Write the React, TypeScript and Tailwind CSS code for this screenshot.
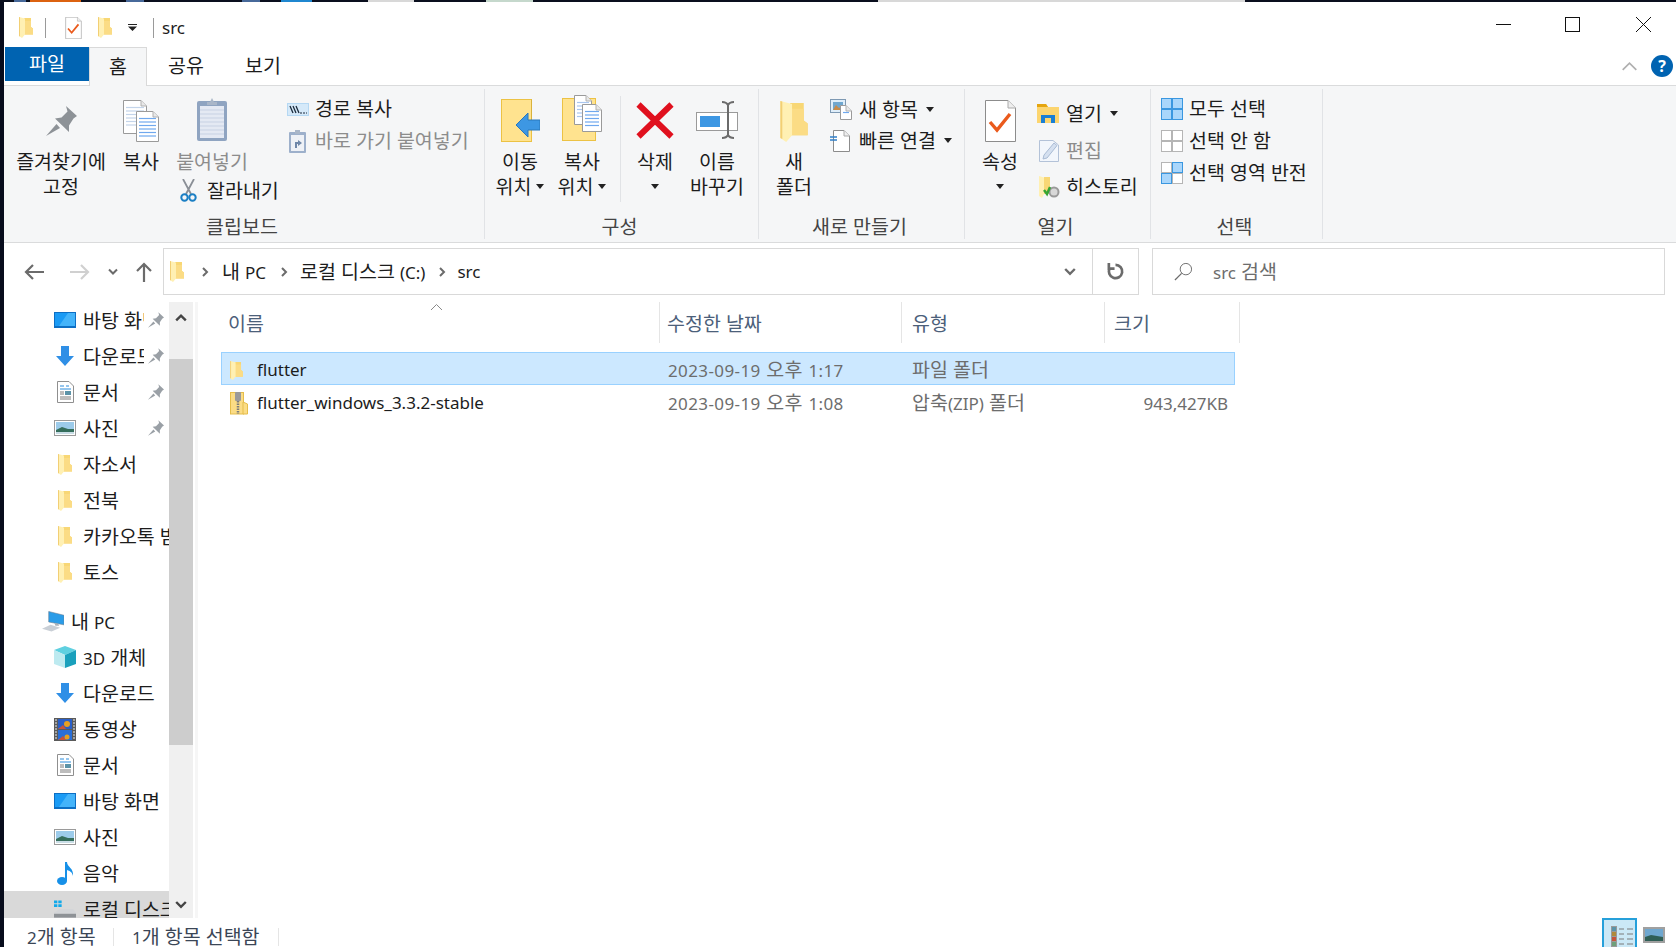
import type { ReactNode } from 'react';

// latin runs are set smaller than hangul, the way the two faces sit together in the reference
const T = ({ children }: { children: string }) => (
  <>
    {children.split(/([!-~]+)/).map((p, i) =>
      i % 2 ? (
        <span key={i} className="text-[17px]">
          {p}
        </span>
      ) : (
        p
      ),
    )}
  </>
);

const Folder = ({ className = 'h-[21px] w-[14px]' }: { className?: string }) => (
  <svg viewBox="0 0 14 21" className={className}>
    <path d="M5 1H12V10L14 11.5V17.5H5z" fill="#f8d775" />
    <path d="M5 4H12V10L14 11.5V17.5H5z" fill="#fbdc85" />
    <path d="M0 0L6 1.5V17.5L3 21L0 19z" fill="#fff0b3" />
    <path d="M0 0L1 .2V19.4L0 19z" fill="#f2cf74" />
  </svg>
);

const Caret = () => (
  <svg viewBox="0 0 8 5" className="inline-block h-[5px] w-[8px] shrink-0">
    <path d="M0 0H8L4 5z" fill="#222" />
  </svg>
);

const CheckDoc = ({ className }: { className: string }) => (
  <svg viewBox="0 0 31 42" className={className}>
    <path d="M.5.5H23L30.5 8V41.5H.5z" fill="#fff" stroke="#8c8c8c" />
    <path d="M23 .5V8H30.5" fill="#eee" stroke="#aaa" />
    <path d="M5 22L12 30L25 14" fill="none" stroke="#ea5a1c" strokeWidth="3.4" />
  </svg>
);

const Page = ({ x, y, w, h, lines = '#6fa8ee' }: { x: number; y: number; w: number; h: number; lines?: string }) => (
  <g>
    <path d={`M${x + 0.5} ${y + 0.5}H${x + w - 6}L${x + w - 0.5} ${y + 6}V${y + h - 0.5}H${x + 0.5}z`} fill="#fff" stroke="#9a9a9a" />
    <path d={`M${x + w - 6} ${y + 0.5}V${y + 6}H${x + w - 0.5}`} fill="#e8e8e8" stroke="#b0b0b0" />
    {Array.from({ length: Math.floor((h - 10) / 3.5) }).map((_, i) => (
      <path key={i} d={`M${x + 3} ${y + 7.5 + i * 3.5}H${x + w - 3}`} stroke={lines} strokeWidth="1.2" />
    ))}
  </g>
);

const Pin = ({ className = 'h-[30px] w-[31px]', fill = '#8d9297' }: { className?: string; fill?: string }) => (
  <svg viewBox="0 0 31 30" className={className}>
    <path d="M20 0L31 10L27.500 12.500L23 19.500L23 26L9 12.500L15.500 11.500L21.500 5.500z" fill={fill} />
    <path d="M10.500 18L14 22L0 30z" fill={fill} />
  </svg>
);

const CopyIcon = () => (
  <svg viewBox="0 0 36 42" className="h-[42px] w-[36px]">
    <Page x={0} y={0} w={24} h={34} lines="#c3d4ea" />
    <Page x={13} y={11} w={23} h={31} />
  </svg>
);

const Clipboard = ({ className = 'h-[43px] w-[30px]' }: { className?: string }) => (
  <svg viewBox="0 0 30 43" className={className}>
    <rect x="0" y="3" width="30" height="40" rx="2" fill="#8fa4c1" />
    <rect x="3" y="8" width="24" height="32" fill="#e4e9f3" />
    {[12, 16, 20, 24, 28, 32, 36].map((y) => (
      <path key={y} d={`M3 ${y}H27`} stroke="#c7d1e3" />
    ))}
    <path d="M10 7V4H13L15 0L17 4H20V7z" fill="#a9b6c8" />
  </svg>
);

const PathIcon = () => (
  <svg viewBox="0 0 22 13" className="h-[13px] w-[22px]">
    <rect width="22" height="13" fill="#b5d8f3" />
    <rect x="1" y="1" width="20" height="11" fill="#d5e9f9" />
    <path d="M3 3L6 10M6 3L9 10M9 3L12 10" stroke="#1b2b3c" strokeWidth="1.3" />
    <path d="M13 10H15M16 10H18M19 10H20" stroke="#1b2b3c" />
  </svg>
);

const ShortcutPaste = () => (
  <svg viewBox="0 0 17 23" className="h-[23px] w-[17px]">
    <rect y="2" width="17" height="21" rx="1" fill="#9db0cb" />
    <rect x="2" y="5" width="13" height="16" fill="#eef1f6" />
    <path d="M6 0H11V4H6z" fill="#a9b6c8" />
    <path d="M6 18V12H9V10L13 13L9 16V14H8V18z" fill="#6f87a8" />
  </svg>
);

const Scissors = () => (
  <svg viewBox="0 0 17 23" className="h-[23px] w-[17px] shrink-0">
    <path d="M3 0L11 15M14 0L6 15" stroke="#8a8f96" strokeWidth="1.8" fill="none" />
    <circle cx="4.5" cy="18.5" r="3.2" fill="none" stroke="#1b7fc4" strokeWidth="2" />
    <circle cx="12.5" cy="18.5" r="3.2" fill="none" stroke="#1b7fc4" strokeWidth="2" />
  </svg>
);

const MoveIcon = () => (
  <svg viewBox="0 0 39 43" className="h-[43px] w-[39px]">
    <rect x=".5" y=".5" width="30" height="42" fill="#ffe38f" stroke="#ecc244" />
    <path d="M30.5 .5V30" stroke="#d9b23c" />
    <path d="M15 26L27 14V21H39V31H27V38z" fill="#3d97e3" stroke="#2a78bb" />
  </svg>
);

const CopyToIcon = () => (
  <svg viewBox="0 0 40 46" className="h-[46px] w-[40px]">
    <rect x=".5" y="3.5" width="33" height="42" fill="#ffe38f" stroke="#ecc244" />
    <Page x={12} y={0} w={18} h={30} lines="#a9c6ee" />
    <Page x={20} y={9} w={20} h={28} />
  </svg>
);

const DeleteIcon = () => (
  <svg viewBox="0 0 38 37" className="h-[37px] w-[38px]">
    <path d="M2.5 2.5L35.5 34.5M35.5 2.5L2.5 34.5" stroke="#e0101e" strokeWidth="6" />
  </svg>
);

const RenameIcon = () => (
  <svg viewBox="0 0 42 38" className="h-[38px] w-[42px]">
    <rect x=".5" y="11.5" width="41" height="18" fill="#fff" stroke="#9a9a9a" />
    <rect x="4" y="15" width="20" height="11" fill="#3d97e3" />
    <path d="M26 1C29 1 31 2 32 4C33 2 35 1 38 1M32 4V34M26 37C29 37 31 36 32 34C33 36 35 37 38 37" fill="none" stroke="#6b6b6b" strokeWidth="2" />
  </svg>
);

const NewItemIcon = () => (
  <svg viewBox="0 0 22 21" className="h-[21px] w-[22px]">
    <rect x=".5" y=".5" width="15" height="13" fill="#dfeefa" stroke="#7e99b3" />
    <rect x="3" y="3" width="10" height="8" fill="#6fa7cf" />
    <path d="M3 11L6 6L9 9L13 7V11z" fill="#c78b4a" />
    <Page x={10} y={6} w={12} h={15} />
  </svg>
);

const EasyAccessIcon = () => (
  <svg viewBox="0 0 20 22" className="h-[22px] w-[20px]">
    <path d="M3.5 .5H14L19.5 6V21.5H3.5z" fill="#fff" stroke="#8c8c8c" />
    <path d="M14 .5V6H19.5" fill="#eee" stroke="#aaa" />
    <path d="M0 7H7M0 10H7" stroke="#2f7fc9" strokeWidth="1.4" />
  </svg>
);

const OpenIcon = () => (
  <svg viewBox="0 0 22 19" className="h-[19px] w-[22px]">
    <path d="M0 0H9L11 3H22V19H0z" fill="#fcd56f" />
    <path d="M0 0H9L11 3H0z" fill="#e5a50f" />
    <path d="M4 19V11H18V19H14V14H8V19z" fill="#1a7fd4" />
  </svg>
);

const EditIcon = () => (
  <svg viewBox="0 0 20 22" className="h-[22px] w-[20px]">
    <path d="M.5 .5H14L19.5 5V21.5H.5z" fill="#f2f6fc" stroke="#b3c2d8" />
    <path d="M4 19L5 15L15 3L18 5.500L8 18z" fill="#d5e0f0" stroke="#a9bbd4" />
  </svg>
);

const HistoryIcon = () => (
  <svg viewBox="0 0 21 22" className="h-[22px] w-[21px]">
    <path d="M0 0L5 1.5V18L3 22L0 20z" fill="#fff0b3" />
    <path d="M5 1H11V18H5z" fill="#f8d775" />
    <circle cx="15" cy="16" r="5.500" fill="#9a9a9a" />
    <circle cx="15" cy="16" r="3.500" fill="#d8d8d8" />
    <path d="M5 14L8 18L11 11" fill="none" stroke="#35a534" strokeWidth="2.4" />
  </svg>
);

const SelectGrid = ({ on }: { on: boolean[] }) => (
  <svg viewBox="0 0 22 22" className="h-[22px] w-[22px]">
    {[
      [0.5, 0.5],
      [11.5, 0.5],
      [0.5, 11.5],
      [11.5, 11.5],
    ].map(([x, y], i) => (
      <rect key={i} x={x} y={y} width="10" height="10" fill={on[i] ? '#a9d6fb' : '#fff'} stroke={on[i] ? '#3a97e0' : '#b5b5b5'} />
    ))}
  </svg>
);

const Desktop = () => (
  <svg viewBox="0 0 22 16" className="h-[16px] w-[22px]">
    <rect width="22" height="16" fill="#0d6fc4" />
    <rect x="1" y="1" width="20" height="13" fill="#1a9bf5" />
    <path d="M14 1H21V14H5z" fill="#44b4fa" />
  </svg>
);

const Download = () => (
  <svg viewBox="0 0 18 20" className="h-[20px] w-[18px]">
    <path d="M5 0H13V10H18L9 20L0 10H5z" fill="#2f8fe6" />
  </svg>
);

const DocIcon = () => (
  <svg viewBox="0 0 17 22" className="h-[22px] w-[17px]">
    <path d="M.5 .5H12L16.500 5V21.500H.5z" fill="#fff" stroke="#8f8f8f" />
    <path d="M3 5H7M9 5H12M3 8H14" stroke="#2c8ddc" />
    <rect x="8" y="10" width="6" height="4" fill="#5b93a8" />
    <path d="M3 11H7M3 13H7M3 16H14M3 18H14" stroke="#7a7a7a" />
  </svg>
);

const Pictures = () => (
  <svg viewBox="0 0 22 16" className="h-[16px] w-[22px]">
    <rect x=".5" y=".5" width="21" height="15" fill="#fff" stroke="#9a9a9a" />
    <rect x="2" y="2" width="18" height="12" fill="#9ccbea" />
    <path d="M2 10L8 7L14 9L20 9V14H2z" fill="#356e5c" />
    <path d="M2 12H20V14H2z" fill="#c9dde6" />
  </svg>
);

const Pc = () => (
  <svg viewBox="0 0 23 21" className="h-[21px] w-[23px]">
    <path d="M7 0L23 4V14L7 11z" fill="#2a9ce8" stroke="#6a7f92" strokeWidth=".6" />
    <path d="M0 18L9 14L19 17L10 21z" fill="#c9cfd6" />
    <path d="M13 12L14 15L18 15L17 13z" fill="#a8b0b8" />
  </svg>
);

const Cube = () => (
  <svg viewBox="0 0 22 22" className="h-[22px] w-[22px]">
    <path d="M11 0L22 4L11 9L0 4z" fill="#5fd0e0" />
    <path d="M0 4L11 9V22L0 18z" fill="#bdeaf0" />
    <path d="M22 4L11 9V22L22 18z" fill="#1aa0bc" />
  </svg>
);

const Film = () => (
  <svg viewBox="0 0 22 23" className="h-[23px] w-[22px]">
    <rect width="22" height="23" fill="#5a5a5a" />
    <rect x="4" y="1" width="14" height="10" fill="#2a5fc8" />
    <rect x="4" y="12" width="14" height="10" fill="#2a6fd8" />
    <circle cx="13" cy="6" r="3" fill="#e8a020" />
    <path d="M4 11L9 7L12 11zM4 22L9 18L12 22z" fill="#c8533a" />
    <circle cx="13" cy="19" r="2.500" fill="#e8a020" />
    <path d="M1 2H3M1 5H3M1 8H3M1 11H3M1 14H3M1 17H3M1 20H3M19 2H21M19 5H21M19 8H21M19 11H21M19 14H21M19 17H21M19 20H21" stroke="#eee" />
  </svg>
);

const Music = () => (
  <svg viewBox="0 0 17 23" className="h-[23px] w-[17px]">
    <ellipse cx="5" cy="19" rx="5" ry="4" fill="#1690e8" />
    <path d="M8 0H10C10 5 17 6 16 14C15 10 13 9 10 8V19H8z" fill="#1690e8" />
  </svg>
);

const Drive = () => (
  <svg viewBox="0 0 23 18" className="h-[18px] w-[23px]">
    <path d="M0 0H3.500V3H0zM4.500 0H8V3H4.500zM0 4H3.500V7H0zM4.500 4H8V7H4.500z" fill="#11a9ea" />
    <path d="M0 13L6 9H20L23 13V18H0z" fill="#d3d5d8" />
    <path d="M0 14H23V18H0z" fill="#8e9296" />
  </svg>
);

const ZipIcon = () => (
  <svg viewBox="0 0 18 23" className="h-[23px] w-[18px]">
    <rect x=".5" y=".5" width="13" height="21.500" fill="#fbdc85" stroke="#e5bd4a" />
    <path d="M13 10L17.500 12V22H13z" fill="#fbdc85" stroke="#e5bd4a" />
    <rect x="5" y="0" width="6" height="9" rx="1" fill="#9a9a9a" />
    <path d="M8 9V22" stroke="#7b7b7b" strokeWidth="2.500" strokeDasharray="1.500 1" />
  </svg>
);

const Chevron = ({ dir = 'right', className = '', color = '#6b6b6b', width = 2 }: { dir?: 'right' | 'down' | 'up'; className?: string; color?: string; width?: number }) => {
  const d = dir === 'right' ? 'M2 1L6 5L2 9' : dir === 'down' ? 'M1 2.500L5 6.500L9 2.500' : 'M1 7L5 3L9 7';
  return (
    <svg viewBox={dir === 'right' ? '0 0 8 10' : '0 0 10 10'} className={className}>
      <path d={d} fill="none" stroke={color} strokeWidth={width} />
    </svg>
  );
};

const Arrow = ({ rotate, color }: { rotate: string; color: string }) => (
  <svg viewBox="0 0 20 16" className={`h-[16px] w-[20px] ${rotate}`}>
    <path d="M20 8H2M9 1L2 8L9 15" fill="none" stroke={color} strokeWidth="2.200" />
  </svg>
);

function LargeButton({ icon, lines, className = '', disabled }: { icon: ReactNode; lines: ReactNode[]; className?: string; disabled?: boolean }) {
  return (
    <div className={`flex shrink-0 flex-col items-center ${className}`}>
      <div className="flex h-[53px] items-end">{icon}</div>
      <div className={`mt-[7px] flex flex-col items-center leading-[25px] ${disabled ? 'text-[#8c8c8c]' : ''}`}>
        {lines.map((l, i) => (
          <div key={i} className="flex h-[25px] items-center gap-[5px] whitespace-nowrap">
            {l}
          </div>
        ))}
      </div>
    </div>
  );
}

function SmallRow({ icon, text, h, slot, disabled, caret }: { icon: ReactNode; text: string; h: string; slot: string; disabled?: boolean; caret?: boolean }) {
  return (
    <div className={`flex items-center whitespace-nowrap ${h} ${disabled ? 'text-[#8c8c8c]' : ''}`}>
      <div className={`flex shrink-0 items-center ${slot}`}>{icon}</div>
      <span>{text}</span>
      {caret && (
        <span className="ml-[8px] flex">
          <Caret />
        </span>
      )}
    </div>
  );
}

function Group({ label, width, children }: { label: string; width: string; children: ReactNode }) {
  return (
    <div className={`flex h-full shrink-0 flex-col border-r border-[#e1e3e6] ${width}`}>
      <div className="flex flex-1 items-start">{children}</div>
      <div className="flex h-[24px] items-center justify-center pr-[4px] text-[#444]">{label}</div>
    </div>
  );
}

function NavItem({ icon, text, pin, selected, indent = 'pl-[50px]', slot = 'w-[29px]' }: { icon: ReactNode; text: string; pin?: boolean; selected?: boolean; indent?: string; slot?: string }) {
  return (
    <div className={`flex h-[36px] shrink-0 items-center ${indent} ${selected ? 'bg-[#d9d9d9]' : ''}`}>
      <div className={`flex shrink-0 items-center ${slot}`}>
        <div className="flex w-[22px] justify-center">{icon}</div>
      </div>
      <div className={`overflow-hidden whitespace-nowrap pt-px ${pin ? 'w-[61px]' : 'flex-1'}`}>
        <T>{text}</T>
      </div>
      {pin && <Pin className="ml-[4px] h-[16px] w-[16px] shrink-0" fill="#9aa0a6" />}
    </div>
  );
}

function FileRow({ icon, name, date, type, size, selected }: { icon: ReactNode; name: string; date: string; type: string; size?: string; selected?: boolean }) {
  return (
    <div className={`flex h-[33px] w-[1014px] items-center border pt-[3px] ${selected ? 'border-[#99d1ff] bg-[#cce8ff]' : 'border-transparent'}`}>
      <div className="flex w-[446px] shrink-0 items-center pl-[8px]">
        <div className="flex w-[27px] shrink-0">{icon}</div>
        <T>{name}</T>
      </div>
      <div className="w-[244px] shrink-0 whitespace-nowrap tracking-[0.4px] text-[#6d6d6d]">
        <T>{date}</T>
      </div>
      <div className="w-[193px] shrink-0 whitespace-nowrap text-[#6d6d6d]">
        <T>{type}</T>
      </div>
      <div className="w-[123px] shrink-0 text-right text-[#6d6d6d]">
        <T>{size ?? ''}</T>
      </div>
    </div>
  );
}

const strip = [
  ['w-[14px]', 'bg-[#0a0f1e]'],
  ['w-[12px]', 'bg-[#47699a]'],
  ['w-[4px]', 'bg-[#0a0f1e]'],
  ['w-[51px]', 'bg-[#dc6210]'],
  ['w-[45px]', 'bg-[#0a0f1e]'],
  ['w-[18px]', 'bg-[#47699a]'],
  ['w-[98px]', 'bg-[#0a0f1e]'],
  ['w-[18px]', 'bg-[#47699a]'],
  ['w-[21px]', 'bg-[#0a0f1e]'],
  ['w-[31px]', 'bg-[#1f87d0]'],
  ['w-[56px]', 'bg-[#0a0f1e]'],
  ['w-[46px]', 'bg-[#d8d8d8]'],
  ['w-[72px]', 'bg-[#0a0f1e]'],
  ['w-[47px]', 'bg-[#c5d8cc]'],
  ['w-[345px]', 'bg-[#0a0f1e]'],
  ['w-[367px]', 'bg-[#d8d8d8]'],
  ['flex-1', 'bg-[#0a0f1e]'],
];

export default function App() {
  return (
    <div className="flex h-[947px] w-[1676px] flex-col overflow-hidden bg-[#070c1c] font-['Noto_Sans','Noto_Sans_CJK_KR',sans-serif] text-[19.5px] text-[#1c1c1c]">
      <div className="flex h-[2px] shrink-0">
        {strip.map(([w, c], i) => (
          <div key={i} className={`${w} ${c}`} />
        ))}
      </div>
      <div className="flex min-h-0 flex-1">
        <div className="w-[4px] shrink-0" />
        <div className="flex min-w-0 flex-1 flex-col bg-white">
          {/* title bar */}
          <div className="flex h-[45px] shrink-0 items-center pt-[6px]">
            <div className="ml-[15px] flex">
              <Folder />
            </div>
            <div className="ml-[12px] h-[20px] w-px bg-[#9a9a9a]" />
            <div className="ml-[19px] flex">
              <CheckDoc className="h-[22px] w-[17px]" />
            </div>
            <div className="ml-[16px] flex">
              <Folder />
            </div>
            <svg viewBox="0 0 9 7" className="ml-[16px] h-[7px] w-[9px]">
              <path d="M0 0H9V1H0zM0 2.500H9L4.500 7z" fill="#222" />
            </svg>
            <div className="ml-[16px] h-[20px] w-px bg-[#9a9a9a]" />
            <span className="ml-[8px] text-[17px]">src</span>
            <div className="ml-auto flex items-center pb-[6px]">
              <div className="h-px w-[15px] bg-[#111]" />
              <div className="ml-[54px] h-[15px] w-[15px] border border-[#111]" />
              <svg viewBox="0 0 15 15" className="ml-[56px] mr-[25px] h-[15px] w-[15px]">
                <path d="M0 0L15 15M15 0L0 15" stroke="#111" />
              </svg>
            </div>
          </div>
          {/* tabs */}
          <div className="flex h-[39px] shrink-0 items-start border-b border-[#dadbdc]">
            <div className="ml-px flex h-[34px] w-[84px] items-center justify-center bg-[#0063b1] text-white">파일</div>
            <div className="flex h-[39px] w-[58px] items-center justify-center border border-b-0 border-[#d9d9d9] bg-[#f5f6f7]">홈</div>
            <div className="flex h-[38px] w-[78px] items-center justify-center">공유</div>
            <div className="flex h-[38px] w-[76px] items-center justify-center">보기</div>
            <div className="ml-auto flex items-center pt-[8px]">
              <Chevron dir="up" className="h-[17px] w-[17px]" color="#b0b0b0" width={1} />
              <div className="ml-[13px] mr-[3px] flex h-[22px] w-[22px] items-center justify-center rounded-full bg-[#0063b1] text-[16px] font-bold text-white">?</div>
            </div>
          </div>
          {/* ribbon */}
          <div className="box-border flex h-[157px] shrink-0 border-b border-[#dadbdc] bg-[#f5f6f7] py-[3px]">
            <Group label="클립보드" width="w-[481px]">
              <LargeButton className="ml-[9px] w-[96px]" icon={<div className="pb-[6px]"><Pin /></div>} lines={['즐겨찾기에', '고정']} />
              <LargeButton className="ml-[10px] w-[44px]" icon={<CopyIcon />} lines={['복사']} />
              <div className="ml-[14px] flex w-[100px] shrink-0 flex-col">
                <LargeButton className="w-[70px]" disabled icon={<div className="pb-px"><Clipboard /></div>} lines={['붙여넣기']} />
                <div className="ml-[3px] mt-[2px] flex items-center gap-[10px] whitespace-nowrap">
                  <Scissors />
                  잘라내기
                </div>
              </div>
              <div className="ml-[10px] flex shrink-0 flex-col pt-[4px]">
                <SmallRow icon={<PathIcon />} text="경로 복사" h="h-[32px]" slot="w-[28px]" />
                <SmallRow icon={<div className="ml-[2px] flex"><ShortcutPaste /></div>} text="바로 가기 붙여넣기" h="h-[32px]" slot="w-[28px]" disabled />
              </div>
            </Group>
            <Group label="구성" width="w-[274px]">
              <LargeButton className="ml-[5px] w-[60px]" icon={<MoveIcon />} lines={['이동', <>위치<Caret /></>]} />
              <LargeButton className="ml-[2px] w-[60px]" icon={<div className="pb-px"><CopyToIcon /></div>} lines={['복사', <>위치<Caret /></>]} />
              <div className="ml-[8px] mt-[7px] h-[106px] w-px shrink-0 bg-[#e1e3e6]" />
              <LargeButton className="ml-[5px] w-[58px]" icon={<div className="pb-[3px]"><DeleteIcon /></div>} lines={['삭제', <Caret />]} />
              <LargeButton className="ml-[8px] w-[50px]" icon={<div className="pb-[3px]"><RenameIcon /></div>} lines={['이름', '바꾸기']} />
            </Group>
            <Group label="새로 만들기" width="w-[206px]">
              <LargeButton className="ml-[11px] w-[48px]" icon={<Folder className="h-[41px] w-[28px]" />} lines={['새', '폴더']} />
              <div className="ml-[12px] flex shrink-0 flex-col pt-[5px]">
                <SmallRow icon={<NewItemIcon />} text="새 항목" h="h-[31px]" slot="w-[29px]" caret />
                <SmallRow icon={<EasyAccessIcon />} text="빠른 연결" h="h-[31px]" slot="w-[29px]" caret />
              </div>
            </Group>
            <Group label="열기" width="w-[186px]">
              <LargeButton className="ml-[10px] w-[50px]" icon={<CheckDoc className="h-[42px] w-[31px]" />} lines={['속성', <Caret />]} />
              <div className="ml-[12px] flex shrink-0 flex-col pt-[6px]">
                <SmallRow icon={<OpenIcon />} text="열기" h="h-[37px]" slot="w-[29px]" caret />
                <SmallRow icon={<div className="ml-[2px] flex"><EditIcon /></div>} text="편집" h="h-[37px]" slot="w-[29px]" disabled />
                <SmallRow icon={<div className="ml-[2px] flex"><HistoryIcon /></div>} text="히스토리" h="h-[36px]" slot="w-[29px]" />
              </div>
            </Group>
            <Group label="선택" width="w-[172px]">
              <div className="ml-[10px] flex shrink-0 flex-col pt-[4px]">
                <SmallRow icon={<SelectGrid on={[true, true, true, true]} />} text="모두 선택" h="h-[32px]" slot="w-[28px]" />
                <SmallRow icon={<SelectGrid on={[false, false, false, false]} />} text="선택 안 함" h="h-[32px]" slot="w-[28px]" />
                <SmallRow icon={<SelectGrid on={[false, true, true, false]} />} text="선택 영역 반전" h="h-[32px]" slot="w-[28px]" />
              </div>
            </Group>
          </div>
          {/* address bar */}
          <div className="flex h-[59px] shrink-0 items-start pt-[5px]">
            <div className="flex h-[47px] shrink-0 items-center">
              <div className="ml-[20px] flex">
                <Arrow rotate="" color="#6b6b6b" />
              </div>
              <div className="ml-[26px] flex">
                <Arrow rotate="rotate-180" color="#d0d0d0" />
              </div>
              <Chevron dir="down" className="ml-[18px] h-[10px] w-[10px]" />
              <div className="ml-[16px] flex">
                <Arrow rotate="rotate-90" color="#6b6b6b" />
              </div>
            </div>
            <div className="ml-[9px] flex h-[47px] w-[976px] shrink-0 items-center border border-[#d9d9d9]">
              <div className="ml-[6px] flex">
                <Folder />
              </div>
              <Chevron className="ml-[17px] h-[10px] w-[8px]" />
              <span className="ml-[13px] pt-px">
                <T>내 PC</T>
              </span>
              <Chevron className="ml-[14px] h-[10px] w-[8px]" />
              <span className="ml-[12px] pt-px">
                <T>로컬 디스크 (C:)</T>
              </span>
              <Chevron className="ml-[13px] h-[10px] w-[8px]" />
              <span className="ml-[11px] pt-px text-[17px]">src</span>
              <div className="ml-auto flex h-full items-center">
                <Chevron dir="down" className="mr-[16px] h-[12px] w-[12px]" />
                <div className="flex h-full w-[46px] items-center justify-center border-l border-[#d9d9d9]">
                  <svg viewBox="0 0 20 20" className="h-[19px] w-[19px]">
                    <path d="M10 3A7 7 0 1 1 4 6.500M3 1V7H9" fill="none" stroke="#6b6b6b" strokeWidth="2.800" />
                  </svg>
                </div>
              </div>
            </div>
            <div className="ml-[13px] flex h-[47px] w-[513px] shrink-0 items-center border border-[#d9d9d9]">
              <svg viewBox="0 0 20 20" className="ml-[21px] h-[19px] w-[19px]">
                <circle cx="12.500" cy="7.500" r="6" fill="none" stroke="#6b6b6b" />
                <path d="M8 12L1 19" stroke="#6b6b6b" strokeWidth="1.300" />
              </svg>
              <span className="ml-[20px] pt-px text-[#6d6d6d]">
                <T>src 검색</T>
              </span>
            </div>
          </div>
          {/* main */}
          <div className="flex min-h-0 flex-1">
            <div className="flex w-[165px] shrink-0 flex-col overflow-hidden">
              <NavItem icon={<Desktop />} text="바탕 화면" pin />
              <NavItem icon={<Download />} text="다운로드" pin />
              <NavItem icon={<DocIcon />} text="문서" pin />
              <NavItem icon={<Pictures />} text="사진" pin />
              <NavItem icon={<Folder />} text="자소서" />
              <NavItem icon={<Folder />} text="전북" />
              <NavItem icon={<Folder />} text="카카오톡 받은 파일" />
              <NavItem icon={<Folder />} text="토스" />
              <div className="mt-[13px]">
                <NavItem icon={<Pc />} text="내 PC" indent="pl-[38px]" slot="w-[29px]" />
              </div>
              <NavItem icon={<Cube />} text="3D 개체" />
              <NavItem icon={<Download />} text="다운로드" />
              <NavItem icon={<Film />} text="동영상" />
              <NavItem icon={<DocIcon />} text="문서" />
              <NavItem icon={<Desktop />} text="바탕 화면" />
              <NavItem icon={<Pictures />} text="사진" />
              <NavItem icon={<Music />} text="음악" />
              <NavItem icon={<Drive />} text="로컬 디스크 (C:)" selected />
            </div>
            <div className="flex w-[24px] shrink-0 flex-col items-center bg-[#f0f0f0]">
              <div className="flex h-[57px] w-full justify-center pt-[10px]">
                <Chevron dir="up" className="h-[12px] w-[12px]" color="#444" />
              </div>
              <div className="h-[386px] w-full bg-[#cdcdcd]" />
              <div className="mt-auto flex pb-[7px]">
                <Chevron dir="down" className="h-[12px] w-[12px]" color="#444" />
              </div>
            </div>
            <div className="ml-[2px] w-[3px] shrink-0 bg-[#f6f6f6]" />
            <div className="flex-1 pl-[23px]">
              <div className="relative flex h-[41px] text-[#4c607a]">
                <svg viewBox="0 0 11 6" className="absolute left-[210px] top-[2px] h-[6px] w-[11px]">
                  <path d="M0 6L5.500 .5L11 6" fill="none" stroke="#8a8a8a" />
                </svg>
                <div className="flex w-[439px] shrink-0 items-center border-r border-[#e5e5e5] pl-[7px] pt-[2px]">이름</div>
                <div className="flex w-[242px] shrink-0 items-center border-r border-[#e5e5e5] pl-[7px] pt-[2px]">수정한 날짜</div>
                <div className="flex w-[203px] shrink-0 items-center border-r border-[#e5e5e5] pl-[10px] pt-[2px]">유형</div>
                <div className="flex w-[135px] shrink-0 items-center border-r border-[#e5e5e5] pl-[9px] pt-[2px]">크기</div>
              </div>
              <div className="mt-[9px]">
                <FileRow selected icon={<Folder className="h-[19px] w-[13px]" />} name="flutter" date="2023-09-19 오후 1:17" type="파일 폴더" />
                <FileRow icon={<ZipIcon />} name="flutter_windows_3.3.2-stable" date="2023-09-19 오후 1:08" type="압축(ZIP) 폴더" size="943,427KB" />
              </div>
            </div>
          </div>
          {/* status bar */}
          <div className="flex h-[29px] shrink-0 items-center text-[#3b4656]">
            <div className="flex items-center pl-[23px] pt-[9px]">
              <span className="w-[86px] whitespace-nowrap">
                <T>2개 항목</T>
              </span>
              <div className="h-[18px] w-px bg-[#e5e5e5]" />
              <span className="ml-[18px] w-[146px] whitespace-nowrap">
                <T>1개 항목 선택함</T>
              </span>
              <div className="h-[18px] w-px bg-[#e5e5e5]" />
            </div>
            <div className="ml-auto flex h-full items-start">
              <div className="box-content h-[28px] w-[30px] border-x-2 border-t-2 border-[#26a0da] bg-[#cbe8f6] pl-px">
                <svg viewBox="0 0 30 28" className="h-[28px] w-[30px]">
                  {[9, 14, 19, 24].map((y, i) => (
                    <g key={y}>
                      <rect x="6.500" y={y - 2.5} width="5" height="5" fill={['#5b93a8', '#b08a3a', '#c8533a', '#6fa07a'][i]} stroke="#9a9a9a" />
                      <path d={`M14 ${y}H19M22 ${y}H28`} stroke="#7a7a7a" />
                    </g>
                  ))}
                </svg>
              </div>
              <div className="ml-[6px] mr-[11px] mt-[9px] flex">
                <svg viewBox="0 0 22 16" className="h-[16px] w-[22px]">
                  <rect x="1" y="1" width="20" height="14" fill="#fff" stroke="#a0a0a0" strokeWidth="2" />
                  <rect x="2" y="2" width="18" height="12" fill="#6fa7cf" />
                  <path d="M2 10L8 8L20 10V14H2z" fill="#2f5e55" />
                </svg>
              </div>
            </div>
          </div>
        </div>
      </div>
    </div>
  );
}
